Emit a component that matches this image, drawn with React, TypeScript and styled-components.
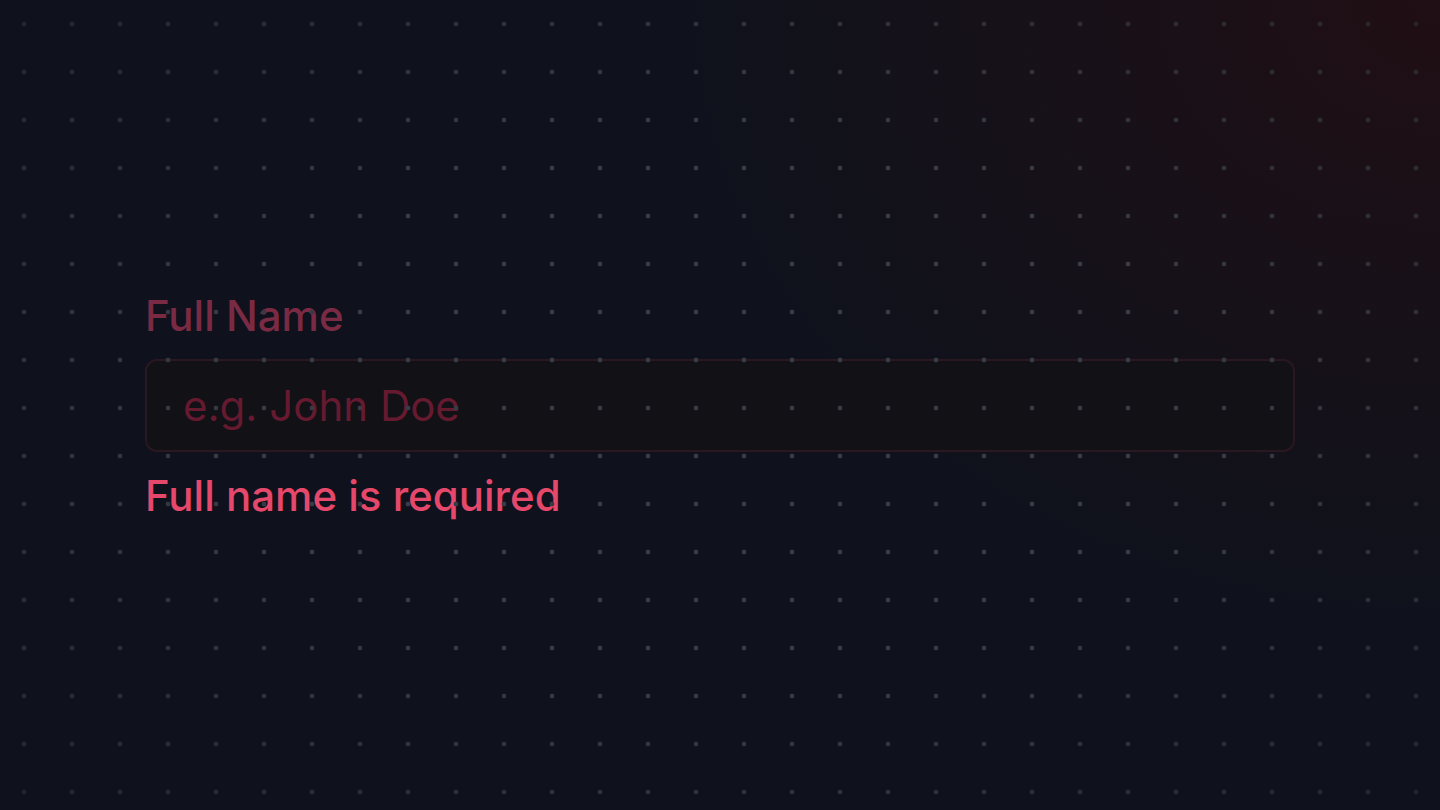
import * as React from "react";
import styled, { createGlobalStyle } from "styled-components";

const Global = createGlobalStyle`
html,
body,
#root{
    margin: 0;
    padding: 0;
    height: 100%;
    overflow: hidden;
    box-sizing: border-box;
}
body{
    background-color: #0f121c;
    background-image: radial-gradient(ellipse 760px 620px at 100% 0%, rgba(36,14,18,0.8) 0%, rgba(36,14,18,0) 100%);
    font-family: Inter, "Liberation Sans", sans-serif;
}
`

const Page = styled.main`
  height: 100%;
  width: 100%;
  position: relative;
  display: flex;
  align-items: center;
  justify-content: center;
`

// dot grid lies over the whole page, content included
const Dots = styled.div`
  position: absolute;
  inset: 0;
  pointer-events: none;
  background-image: radial-gradient(circle at 24px 24px, #383b45 2.1px, transparent 2.7px);
  background-size: 48px 48px;
  -webkit-mask-image: radial-gradient(ellipse 70% 70% at 50% 50%, #000 45%, rgba(0,0,0,0.45) 100%);
  mask-image: radial-gradient(ellipse 70% 70% at 50% 50%, #000 45%, rgba(0,0,0,0.45) 100%);
`

const Field = styled.div`
  width: 1150px;
  display: flex;
  flex-direction: column;
`

const Label = styled.label`
  font-size: 42px;
  font-weight: 500;
  color: #7b2a43;
  line-height: normal;
  margin-bottom: 18px;
`

const Input = styled.input`
  box-sizing: border-box;
  width: 100%;
  height: 93px;
  padding: 1px 36px 0;
  border: 2px solid #2a1820;
  border-radius: 12px;
  background: #111116;
  color: #e5e7eb;
  font-family: Inter, "Liberation Sans", sans-serif;
  font-size: 42px;
  outline: none;
  &::placeholder{
    color: #661a30;
  }
`

const Error = styled.p`
  margin: 18px 0 0;
  font-size: 42px;
  font-weight: 500;
  color: #e5486b;
  line-height: normal;
`

const App = () => {
  return (
    <Page>
      <Global/>
      <Field>
        <Label htmlFor="fullName">Full Name</Label>
        <Input id="fullName" placeholder="e.g. John Doe"/>
        <Error>Full name is required</Error>
      </Field>
      <Dots/>
    </Page>
  )
}

export default App
